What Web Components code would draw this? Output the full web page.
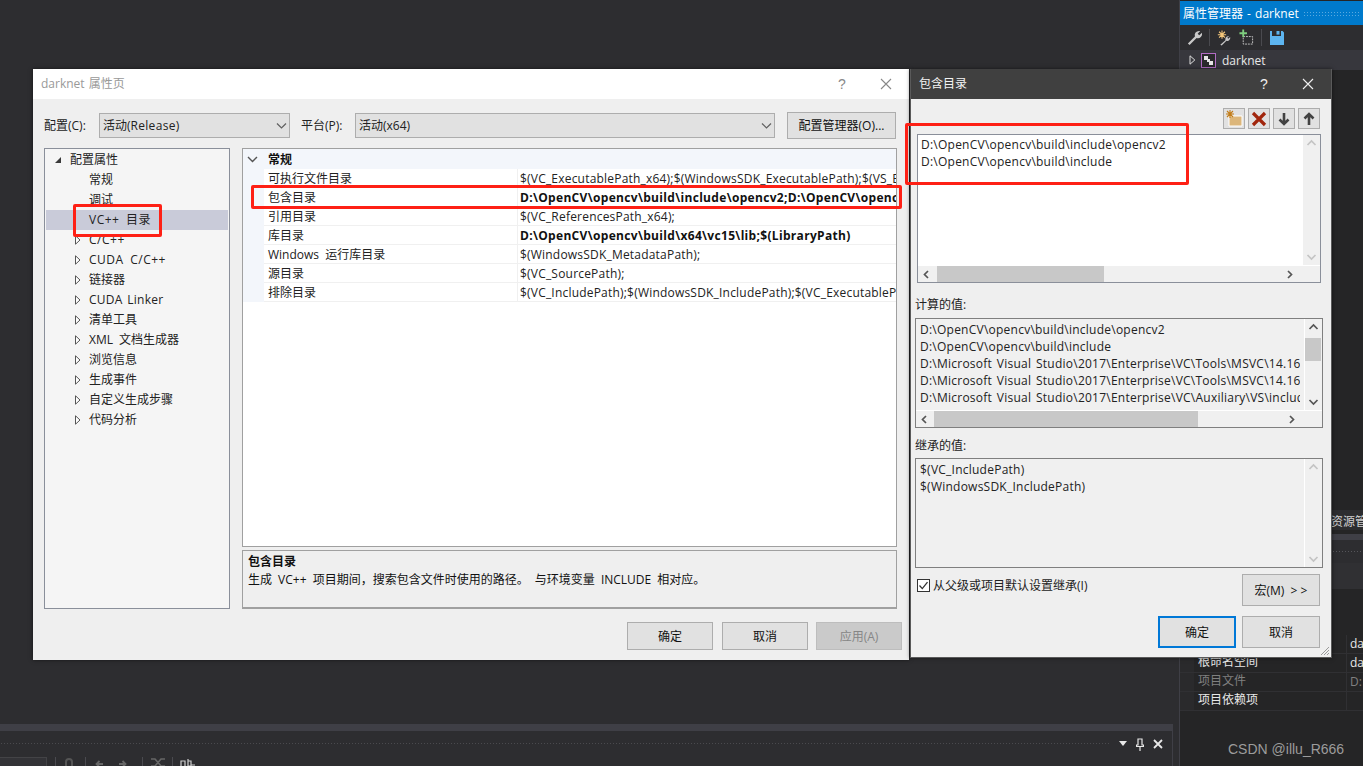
<!DOCTYPE html>
<html lang="zh-CN">
<head>
<meta charset="utf-8">
<title>darknet 属性页</title>
<style>
html,body{margin:0;padding:0;background:#2d2d30;overflow:hidden}
body{font:12px/17px "Open Sans","Noto Sans CJK SC",sans-serif;color:#1e1e1e}
.l{letter-spacing:.24px;word-spacing:1.4px}
.b{letter-spacing:.32px}
.p{letter-spacing:.5px;word-spacing:3px}
.w{word-spacing:3px}
</style>
</head>
<body>
<script>
function def(name, css, html){
  customElements.define(name, class extends HTMLElement{
    constructor(){
      super();
      this.attachShadow({mode:'open'});
    }
    connectedCallback(){
      if(this._i)return;
      this._i=1;
      const h=typeof html==='function'?html(this):html;
      this.shadowRoot.innerHTML='<style>'+css+'</style>'+h;
    }
  });
}
const chev=(d,c)=>{
  const p={l:'M6 2 2.5 5.5 6 9',r:'M3 2 6.5 5.5 3 9',u:'M1.5 7 5.5 3 9.5 7',d:'M1.5 4 5.5 8 9.5 4'}[d];
  return `<svg width="11" height="11" viewBox="0 0 11 11"><path d="${p}" fill="none" stroke="${c}" stroke-width="1.7"/></svg>`;
};

def('vs-desktop',`:host{display:block;position:relative;width:1363px;height:766px;overflow:hidden;background:#2d2d30}`,`<slot></slot>`);

def('vs-dialog',`
:host{display:flex;flex-direction:column;position:absolute;box-sizing:border-box;background:#efefef;box-shadow:0 0 4px rgba(0,0,0,.55)}
.t{flex:none;height:30px;display:flex;align-items:center;background:#fff;color:#999;padding:0 0 1px 8px;box-sizing:border-box}
.t span{flex:1;word-spacing:1px}
.t i{font:normal 14px/28px "Liberation Sans",sans-serif;width:14px;text-align:center;margin-right:31px;color:#888}
.t svg{margin-right:17px;stroke:#888}
:host([dark]){border:1px solid #5a5a5a;border-top:0}
:host([dark]) .t{background:#404040;color:#f4f4f4}
:host([dark]) .t i{color:#f0f0f0}
:host([dark]) .t svg{stroke:#f0f0f0}
.b{flex:1;min-height:0;display:flex;flex-direction:column;position:relative}
`,h=>`<div class="t"><span>${h.getAttribute('caption')}</span><i>?</i><svg width="12" height="12" viewBox="0 0 12 12"><path d="M1 1 11 11M11 1 1 11" fill="none" stroke-width="1.1"/></svg></div><div class="b"><slot></slot></div>`);

def('vs-button',`
:host{display:inline-flex;align-items:center;justify-content:center;box-sizing:border-box;background:#e1e1e1;border:1px solid #adadad;color:#111;flex:none}
:host([primary]){border:2px solid #0078d7}
:host([disabled]){background:#cacaca;border-color:#bdbdbd;color:#868686}
`,`<slot></slot>`);

def('vs-combo',`
:host{display:flex;align-items:center;box-sizing:border-box;height:25px;background:#e1e1e1;border:1px solid #adadad;padding:0 2px 0 3px;flex:none;color:#222}
span{flex:1}
svg{display:block}
`,`<span><slot></slot></span><svg width="11" height="11" viewBox="0 0 11 11"><path d="M1 3.5 5.500 8 10 3.5" fill="none" stroke="#606060" stroke-width="1.2"/></svg>`);

def('vs-tree',`
:host{display:block;box-sizing:border-box;background:#f5f5f5;border:1px solid #8a8f9a;padding:1px}
`,`<slot></slot>`);

def('vs-tree-item',`
:host{display:flex;align-items:center;height:20px;box-sizing:border-box;padding-bottom:1px;color:#222;white-space:nowrap}
:host([selected]){background:#c9cbd9}
.a{width:10px;height:10px;flex:none;margin-left:var(--arrow,27px);margin-right:var(--gap,6px)}
.a svg{display:block}
`,h=>{
  const k=h.getAttribute('kind');
  const root=k==='root';
  const st=root?'--arrow:7px;--gap:7px':'--arrow:27px;--gap:6px';
  const svg=root?'<svg width="10" height="10" viewBox="0 0 10 10"><path d="M8 2v6H2z" fill="#3a3a3a"/></svg>'
    :k==='leaf'?'':'<svg width="10" height="10" viewBox="0 0 10 10"><path d="M2.500 .8 7 5 2.500 9.200z" fill="#fff" stroke="#555"/></svg>';
  return `<div class="a" style="${st}">${svg}</div><slot></slot>`;
});

def('vs-prop-grid',`
:host{display:block;box-sizing:border-box;background:#fff;border:1px solid #a0a0a0;overflow:hidden}
`,`<slot></slot>`);
def('vs-prop-cat',`
:host{display:flex;align-items:center;height:20px;background:#f3f6fb;font-weight:700;color:#111}
svg{margin:0 10px 0 4px;flex:none}
`,`<svg width="11" height="11" viewBox="0 0 11 11"><path d="M1 3 5.500 7.500 10 3" fill="none" stroke="#555" stroke-width="1.4"/></svg><slot></slot>`);
def('vs-prop-row',`
:host{display:grid;grid-template-columns:21px 253px minmax(0,1fr);height:19px;color:#222;white-space:nowrap}
.g{background:#f3f6fb}
.n{padding-left:4px;border-bottom:1px solid #f0f0f0;line-height:20px;height:18px;overflow:visible;word-spacing:3px}
.v{padding-left:2px;border-left:1px solid #f0f0f0;border-bottom:1px solid #f0f0f0;line-height:20px;height:18px;overflow:hidden;letter-spacing:.2px}
:host([bold]) .v{font-weight:700;color:#111;letter-spacing:.32px}
`,h=>`<div class="g"></div><div class="n">${h.getAttribute('name')}</div><div class="v"><slot></slot></div>`);

def('vs-desc',`
:host{display:block;box-sizing:border-box;border:1px solid #a0a0a0;border-bottom-width:2px;background:#efefef;padding:2px 5px;color:#111;line-height:18px}
b{display:block;font-weight:700}
`,h=>`<b>${h.getAttribute('heading')}</b><slot></slot>`);

def('vs-list',`
:host{display:grid;grid-template-columns:minmax(0,1fr) 18px;grid-template-rows:minmax(0,1fr) 17px;box-sizing:border-box;border:1px solid #8a8f9a;background:#fff;color:#222;line-height:17px}
:host([tinted]){background:#f0f0f0;border-color:#7f7f7f}
.c{padding:1px 0 1px 3px;overflow:hidden;white-space:nowrap;margin-right:3px}
:host([tinted]) .c{padding-top:2px;padding-left:4px;margin-right:4px}
.v,.h{background:#f0f0f0;display:flex;align-items:center;justify-content:space-between}
.v{flex-direction:column;position:relative;border-left:1px solid #fff}
.h{border-top:1px solid #fff;grid-column:1/2;position:relative;padding:0 6px 0 4px}
.x{background:#f0f0f0;border-top:1px solid #fff}
.k{position:absolute;background:#c8c8c8}
svg{display:block;flex:none}
.v svg{margin:3px 0}
`,h=>{
  const dim=h.hasAttribute('vdim');
  const vk=h.getAttribute('vthumb');
  const hk=h.getAttribute('hthumb');
  let vh=vk?`<div class="k" style="left:0;right:1px;top:${vk.split(',')[0]}px;height:${vk.split(',')[1]}px"></div>`:'';
  let hh=hk?`<div class="k" style="top:0;bottom:0;left:${hk.split(',')[0]}px;width:${hk.split(',')[1]}px"></div>`:'';
  const c=dim?'#c4c4c4':'#555';
  const noH=h.hasAttribute('nohscroll');
  return `<div class="c" ${noH?'style="grid-row:1/3"':''}><slot></slot></div>
  <div class="v" ${noH?'style="grid-row:1/3;grid-column:2"':''}>${chev('u',c)}${vh}${chev('d',c)}</div>
  ${noH?'':`<div class="h">${chev('l','#555')}${hh}${chev('r','#555')}</div><div class="x"></div>`}`;
});

def('vs-line',`:host{display:block;height:17px;line-height:17px;white-space:nowrap;letter-spacing:.24px;word-spacing:1.4px}`,`<slot></slot>`);

def('vs-check',`
:host{display:flex;align-items:center;gap:3px;color:#222}
svg{flex:none;display:block}
`,`<svg width="13" height="13" viewBox="0 0 13 13"><rect x=".5" y=".5" width="12" height="12" fill="#fff" stroke="#333"/><path d="M2.500 6.500 5.300 9.600 10.500 3.200" fill="none" stroke="#333" stroke-width="1.3"/></svg><slot></slot>`);

def('vs-mark',`:host{display:block;position:absolute;box-sizing:border-box;border:3px solid #fe2015;border-radius:2px;pointer-events:none}`,``);

def('vs-sep',`:host{display:block;width:1px;height:17px;background:#4a4a4f;flex:none}`,``);

def('vs-right-dock',`
:host{display:flex;flex-direction:column;position:absolute;left:1179px;top:0;width:184px;height:766px;background:#252526;border-left:1px solid #3f3f46;box-sizing:border-box;color:#e8e8e8}
.tb{height:24px;margin-top:1px;background:#007acc;color:#fff;display:flex;align-items:center;padding-left:3px;white-space:nowrap;flex:none;word-spacing:1px}
.dots{flex:1;height:5px;margin:0 4px;background-image:radial-gradient(#5aa9e0 .6px,transparent .7px);background-size:3px 3px}
.tools{height:25px;background:#2d2d30;display:flex;align-items:center;padding-left:7px;flex:none}
.tools svg{display:block;flex:none}
.node{height:20px;background:#37373d;display:flex;align-items:center;padding-left:9px;gap:6px;flex:none}
.node svg:first-child{margin-right:-1px}
.fill{height:442px;flex:none}
.tab{height:20px;background:#2d2d30;padding-left:151px;line-height:24px;white-space:nowrap;overflow:hidden;color:#d0d0d0;margin-top:-2px;flex:none}
.band{height:6px;background:#3f3f46;margin-top:4px;flex:none}
.head{height:23px;background:#2d2d30;flex:none;display:flex;align-items:center;padding-left:152px}
.head div{height:3px;flex:1;background-image:radial-gradient(#55555a .6px,transparent .7px);background-size:3px 3px}
.t2{height:26px;background:#303033;flex:none}
.gap{height:46px;flex:none}
`,`
<div class="tb"><span>属性管理器 - darknet</span><div class="dots"></div></div>
<div class="tools">
<svg width="16" height="16" viewBox="0 0 18 18" fill="#c8c8c8" style="margin-right:6px"><path d="M13.500 1a4.800 4.800 0 0 0-4.600 6.200L1 15.200 2.900 17l7.900-8a4.800 4.800 0 0 0 6-6l-3 2.900L12 4.100 14.900 1.200z"/></svg>
<vs-sep></vs-sep>
<svg width="15" height="16" viewBox="0 0 18 18" style="margin-left:7px"><path d="M13.500 7a3.600 3.600 0 0 0-3.400 4.600L4 17l1.600 1 5.700-5.700a3.600 3.600 0 0 0 4.500-4.400l-2.200 2.100-1.300-1.300L14.600 7z" fill="#c8c8c8"/><path d="M6 0v10M1 5h10M2.500 1.500l7 7M9.500 1.500l-7 7" stroke="#f5c77a" stroke-width="1.300"/></svg>
<svg width="15" height="17" viewBox="0 0 16 17" style="margin-left:7px"><rect x="4.500" y="7.500" width="10" height="8" fill="none" stroke="#c8c8c8" stroke-dasharray="2 1"/><path d="M4.500 0v8M.5 4h8" stroke="#7fce7f" stroke-width="2"/></svg>
<vs-sep style="margin-left:7px"></vs-sep>
<svg width="14" height="14" viewBox="0 0 14 14" style="margin-left:8px"><path d="M0 0h2v5h9V0h1.600L14 1.500V14H0z" fill="#5db5f0"/><rect x="6.500" y="0" width="3" height="3.600" fill="#5db5f0"/></svg>
</div>
<div class="node">
<svg width="7" height="10" viewBox="0 0 7 10"><path d="M1 .8 5.800 5 1 9.200z" fill="none" stroke="#ddd"/></svg>
<svg width="15" height="15" viewBox="0 0 15 15"><rect x=".5" y=".5" width="14" height="14" fill="#2a2a2c" stroke="#b26cc4"/><path d="M3 3h4v3h2v2h3v4H8V9H6V7H3z" fill="#e6e6e6"/></svg>
<span>darknet</span>
</div>
<div class="fill"></div>
<div class="tab">资源管</div>
<div class="band"></div>
<div class="head"><div></div></div>
<div class="t2"></div>
<div class="gap"></div>
<slot></slot>`);

def('vs-info-row',`
:host{display:grid;grid-template-columns:14px 152px minmax(0,1fr);height:19px;box-sizing:border-box;border-bottom:1px solid #303033;line-height:16px;color:#e8e8e8;white-space:nowrap;overflow:hidden}
.g{background:#2a2a2c}
.n{padding-left:4px}
.v{border-left:1px solid #303033;padding-left:3px;overflow:hidden;line-height:17px}
:host([dim]) .n,:host([dim]) .v{color:#808080}
`,h=>`<div class="g"></div><div class="n">${h.getAttribute('name')}</div><div class="v"><slot></slot></div>`);

def('vs-bottom-dock',`
:host{display:flex;flex-direction:column;position:absolute;left:0;top:724px;width:1172px;height:42px;background:#2d2d30;border-right:1px solid #3f3f46}
.band{height:7px;background:#3f3f46;flex:none}
.head{height:26px;display:flex;align-items:center;flex:none;padding-right:9px}
.d{flex:1;height:4px;background-image:radial-gradient(#4a4a4e .7px,transparent .8px);background-size:3px 3px;margin-right:10px}
.head svg{display:block;flex:none}
.tools{flex:1;display:flex;align-items:flex-start;overflow:hidden}
.in{width:47px;height:9px;border-top:1px solid #434346;border-right:1px solid #434346;margin-right:8px;box-sizing:border-box;background:#333337}
.tools vs-sep{height:10px}
.tools svg{display:block;flex:none;margin-top:1px}
`,`
<div class="band"></div>
<div class="head"><div class="d"></div>
<svg width="9" height="6" viewBox="0 0 9 6"><path d="M0 0h8L4 5z" fill="#e8e8e8"/></svg>
<svg width="8" height="13" viewBox="0 0 8 13" style="margin-left:8px"><path d="M2 1h4v6h1.500v1.500H.5V7H2zM4 8.500V13" fill="none" stroke="#e8e8e8" stroke-width="1.200"/></svg>
<svg width="10" height="10" viewBox="0 0 10 10" style="margin-left:9px"><path d="M1 1 9 9M9 1 1 9" stroke="#e8e8e8" stroke-width="1.800"/></svg>
</div>
<div class="tools">
<div class="in"></div><vs-sep></vs-sep>
<svg width="10" height="10" viewBox="0 0 10 10" style="margin:1px 11px 0 8px"><path d="M2 10V4a3 3 0 0 1 6 0v6" fill="none" stroke="#555" stroke-width="2"/></svg>
<vs-sep></vs-sep>
<svg width="9" height="9" viewBox="0 0 9 9" style="margin:2px 0 0 9px"><path d="M8 5H2M4.500 2 1.500 5 4.500 8" fill="none" stroke="#666" stroke-width="1.800"/></svg>
<svg width="9" height="9" viewBox="0 0 9 9" style="margin:2px 15px 0 14px"><path d="M1 5h6M4.500 2 7.500 5 4.500 8" fill="none" stroke="#666" stroke-width="1.800"/></svg>
<vs-sep></vs-sep>
<svg width="14" height="9" viewBox="0 0 14 9" style="margin:1px 7px 0 8px"><path d="M0 1h4l6 7h4M0 8h4l6-7h4" fill="none" stroke="#666" stroke-width="1.600"/></svg>
<vs-sep></vs-sep>
<svg width="15" height="9" viewBox="0 0 15 9" style="margin:1px 0 0 7px"><path d="M1 8V3h4v5M8 9V1M8 3h3v5H8M11 7h4" fill="none" stroke="#cfcfcf" stroke-width="1.200"/></svg>
</div>`);

def('vs-watermark',`:host{position:absolute;left:1228px;top:740px;font:14px/18px "Liberation Sans",sans-serif;color:#9c9c9c;white-space:nowrap}`,`<slot></slot>`);

def('vs-props-body',`
:host{display:flex;flex-direction:column;flex:1;padding:14px 7px 0 11px;min-height:0}
.cfg{display:flex;align-items:center;height:25px;flex:none;margin-bottom:10px;color:#222}
.main{display:grid;grid-template-columns:186px 655px;column-gap:12px;height:461px;flex:none}
.r{display:grid;grid-template-rows:399px 59px;row-gap:3px;min-height:0}
.foot{display:flex;justify-content:flex-end;margin-top:13px}
`,`
<div class="cfg"><slot name="cfg"></slot></div>
<div class="main"><slot name="tree"></slot><div class="r"><slot name="grid"></slot><slot name="desc"></slot></div></div>
<div class="foot"><slot name="foot"></slot></div>`);

def('vs-inc-body',`
:host{display:flex;flex-direction:column;flex:1;padding:9px 8px 0 4px;min-height:0}
.tb{display:flex;justify-content:flex-end;gap:3px;margin-right:3px;margin-bottom:5px}
.row{display:flex;justify-content:space-between;margin-top:6px;padding-left:2px;height:32px;margin-right:3px}
.btns{display:flex;justify-content:flex-end;gap:6px;margin-top:10px;margin-right:3px}
.grip{position:absolute;right:1px;bottom:1px}
`,`
<div class="tb"><slot name="tools"></slot></div>
<slot></slot>
<div class="row"><slot name="check"></slot><slot name="macro"></slot></div>
<div class="btns"><slot name="btns"></slot></div>
<svg class="grip" width="10" height="10" viewBox="0 0 10 10"><path d="M9 1 1 9M9 4 4 9M9 7 7 9" stroke="#9a9a9a"/></svg>`);
</script>

<vs-desktop>
  <vs-right-dock>
    <vs-info-row name="">da</vs-info-row>
    <vs-info-row name="根命名空间">da</vs-info-row>
    <vs-info-row name="项目文件" dim>D:</vs-info-row>
    <vs-info-row name="项目依赖项"></vs-info-row>
  </vs-right-dock>

  <vs-bottom-dock></vs-bottom-dock>

  <vs-dialog caption="darknet 属性页" style="left:33px;top:69px;width:876px;height:591px">
    <vs-props-body>
      <span slot="cfg" style="width:55px;flex:none">配置(C):</span>
      <vs-combo slot="cfg" style="width:191px">活动(<span class="p" style="letter-spacing:.3px">Release</span>)</vs-combo>
      <span slot="cfg" style="width:54px;flex:none;margin-left:11px">平台(P):</span>
      <vs-combo slot="cfg" style="width:420px">活动(x64)</vs-combo>
      <vs-button slot="cfg" style="width:109px;height:27px;margin-left:12px">配置管理器(O)...</vs-button>

      <vs-tree slot="tree">
        <vs-tree-item kind="root">配置属性</vs-tree-item>
        <vs-tree-item kind="leaf">常规</vs-tree-item>
        <vs-tree-item kind="leaf">调试</vs-tree-item>
        <vs-tree-item kind="leaf" selected><span class="p">VC++ 目录</span></vs-tree-item>
        <vs-tree-item><span class="p">C/C++</span></vs-tree-item>
        <vs-tree-item><span class="p">CUDA C/C++</span></vs-tree-item>
        <vs-tree-item>链接器</vs-tree-item>
        <vs-tree-item><span class="l">CUDA Linker</span></vs-tree-item>
        <vs-tree-item>清单工具</vs-tree-item>
        <vs-tree-item><span class="w">XML 文档生成器</span></vs-tree-item>
        <vs-tree-item>浏览信息</vs-tree-item>
        <vs-tree-item>生成事件</vs-tree-item>
        <vs-tree-item>自定义生成步骤</vs-tree-item>
        <vs-tree-item>代码分析</vs-tree-item>
      </vs-tree>

      <vs-prop-grid slot="grid">
        <vs-prop-cat>常规</vs-prop-cat>
        <vs-prop-row name="可执行文件目录">$(VC_ExecutablePath_x64);$(WindowsSDK_ExecutablePath);$(VS_E</vs-prop-row>
        <vs-prop-row name="包含目录" bold>D:\OpenCV\opencv\build\include\opencv2;D:\OpenCV\openc</vs-prop-row>
        <vs-prop-row name="引用目录">$(VC_ReferencesPath_x64);</vs-prop-row>
        <vs-prop-row name="库目录" bold>D:\OpenCV\opencv\build\x64\vc15\lib;$(LibraryPath)</vs-prop-row>
        <vs-prop-row name="Windows 运行库目录">$(WindowsSDK_MetadataPath);</vs-prop-row>
        <vs-prop-row name="源目录">$(VC_SourcePath);</vs-prop-row>
        <vs-prop-row name="排除目录">$(VC_IncludePath);$(WindowsSDK_IncludePath);$(VC_ExecutablePa</vs-prop-row>
      </vs-prop-grid>

      <vs-desc slot="desc" heading="包含目录"><span style="word-spacing:3px">生成 VC++ 项目期间，搜索包含文件时使用的路径。 与环境变量 INCLUDE 相对应。</span></vs-desc>

      <vs-button slot="foot" style="width:86px;height:28px">确定</vs-button>
      <vs-button slot="foot" style="width:86px;height:28px;margin-left:9px">取消</vs-button>
      <vs-button slot="foot" disabled style="width:86px;height:28px;margin-left:8px">应用(A)</vs-button>
    </vs-props-body>
  </vs-dialog>

  <vs-dialog dark caption="包含目录" style="left:910px;top:69px;width:422px;height:589px">
    <vs-inc-body>
      <vs-button slot="tools" style="width:22px;height:21px"><svg width="18" height="17" viewBox="0 0 18 17"><path d="M4 6h13v10H4z" fill="#dcb67a" stroke="#fff"/><path d="M5 0v8M1 4h8M2 1l6 6M8 1 2 7" stroke="#c27d1a" stroke-width="1.100"/></svg></vs-button>
      <vs-button slot="tools" style="width:22px;height:21px"><svg width="16" height="16" viewBox="0 0 16 16"><path d="M2 2 14 14M14 2 2 14" stroke="#a1260d" stroke-width="3.200"/></svg></vs-button>
      <vs-button slot="tools" style="width:22px;height:21px"><svg width="14" height="14" viewBox="0 0 14 14"><path d="M7 1v11M2.500 7.500 7 12l4.500-4.500" fill="none" stroke="#424242" stroke-width="2.600"/></svg></vs-button>
      <vs-button slot="tools" style="width:22px;height:21px"><svg width="14" height="14" viewBox="0 0 14 14"><path d="M7 13V2M2.500 6.500 7 2l4.500 4.500" fill="none" stroke="#424242" stroke-width="2.600"/></svg></vs-button>

      <vs-list vdim hthumb="19,167" style="height:149px;margin:0 2px">
        <vs-line>D:\OpenCV\opencv\build\include\opencv2</vs-line>
        <vs-line>D:\OpenCV\opencv\build\include</vs-line>
      </vs-list>

      <div style="height:17px;margin-top:13px;margin-bottom:5px;color:#222">计算的值:</div>

      <vs-list tinted vthumb="19,23" hthumb="18,264" style="height:110px">
        <vs-line>D:\OpenCV\opencv\build\include\opencv2</vs-line>
        <vs-line>D:\OpenCV\opencv\build\include</vs-line>
        <vs-line>D:\Microsoft Visual Studio\2017\Enterprise\VC\Tools\MSVC\14.16</vs-line>
        <vs-line>D:\Microsoft Visual Studio\2017\Enterprise\VC\Tools\MSVC\14.16</vs-line>
        <vs-line>D:\Microsoft Visual Studio\2017\Enterprise\VC\Auxiliary\VS\includ</vs-line>
      </vs-list>

      <div style="height:17px;margin-top:9px;margin-bottom:4px;color:#222">继承的值:</div>

      <vs-list tinted vdim nohscroll style="height:110px">
        <vs-line>$(VC_IncludePath)</vs-line>
        <vs-line>$(WindowsSDK_IncludePath)</vs-line>
      </vs-list>

      <vs-check slot="check" style="height:22px">从父级或项目默认设置继承(I)</vs-check>
      <vs-button slot="macro" style="width:78px;height:32px">宏(M)&nbsp; &gt; &gt;</vs-button>
      <vs-button slot="btns" primary style="width:78px;height:32px">确定</vs-button>
      <vs-button slot="btns" style="width:78px;height:32px">取消</vs-button>
    </vs-inc-body>
  </vs-dialog>

  <vs-mark style="left:73px;top:204px;width:89px;height:33px"></vs-mark>
  <vs-mark style="left:251px;top:185px;width:651px;height:24px"></vs-mark>
  <vs-mark style="left:905px;top:123px;width:284px;height:62px"></vs-mark>

  <vs-watermark>CSDN @illu_R666</vs-watermark>
</vs-desktop>
</body>
</html>
